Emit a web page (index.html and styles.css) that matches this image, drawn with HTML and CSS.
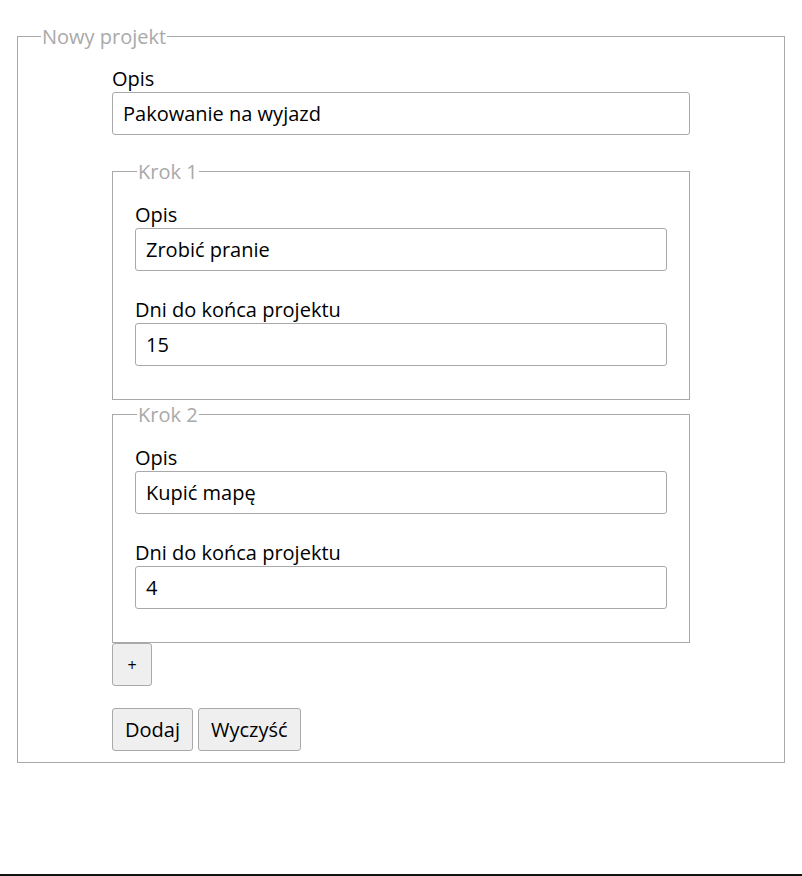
FILE: index.html
```html
<!DOCTYPE html>
<html lang="pl">
<head>
<meta charset="utf-8">
<title>Nowy projekt</title>
<link rel="stylesheet" href="styles.css">
</head>
<body>
<main class="page">
  <form class="project-form">
    <fieldset class="frame frame--project">
      <legend class="frame__legend">Nowy projekt</legend>
      <div class="frame__body frame__body--project">
        <div class="field field--main">
          <label class="field__label" for="p-opis">Opis</label>
          <input class="field__input" id="p-opis" type="text" value="Pakowanie na wyjazd">
        </div>

        <fieldset class="frame frame--step">
          <legend class="frame__legend">Krok 1</legend>
          <div class="frame__body frame__body--step">
            <div class="field">
              <label class="field__label" for="s1-opis">Opis</label>
              <input class="field__input" id="s1-opis" type="text" value="Zrobić pranie">
            </div>
            <div class="field">
              <label class="field__label" for="s1-dni">Dni do końca projektu</label>
              <input class="field__input" id="s1-dni" type="text" value="15">
            </div>
          </div>
        </fieldset>

        <fieldset class="frame frame--step">
          <legend class="frame__legend">Krok 2</legend>
          <div class="frame__body frame__body--step">
            <div class="field">
              <label class="field__label" for="s2-opis">Opis</label>
              <input class="field__input" id="s2-opis" type="text" value="Kupić mapę">
            </div>
            <div class="field">
              <label class="field__label" for="s2-dni">Dni do końca projektu</label>
              <input class="field__input" id="s2-dni" type="text" value="4">
            </div>
          </div>
        </fieldset>

        <div class="add-row">
          <button type="button" class="btn btn--add">+</button>
        </div>

        <div class="actions">
          <button type="submit" class="btn btn--main">Dodaj</button>
          <button type="reset" class="btn btn--main">Wyczyść</button>
        </div>
      </div>
    </fieldset>
  </form>
  <footer class="footer-line"></footer>
</main>
</body>
</html>
```
FILE: styles.css
```css
* {
  box-sizing: border-box;
}

html, body {
  margin: 0;
  padding: 0;
  background: #fff;
}

body {
  font-family: "Open Sans", "Noto Sans", sans-serif;
  font-size: 20px;
  color: #000;
}

.page {
  display: flex;
  flex-direction: column;
  height: 100vh;
}

.project-form {
  margin: 23px 17px 0 17px;
}

.frame {
  margin: 0;
  padding: 0;
  border: 1px solid #a9a9a9;
  min-width: 0;
}

.frame__legend {
  margin-left: 23px;
  padding: 0 1px;
  color: #a9a9a9;
  font-size: 20px;
  line-height: 27px;
}

.frame__body--project {
  padding: 15px 94px 11px 94px;
}

.frame__body--step {
  padding: 16px 22px 8px 22px;
}

.frame--step .frame__legend {
  margin-left: 24px;
}

.frame--step + .frame--step {
  margin-top: 1px;
}

.field {
  margin-bottom: 25px;
}

.field--main {
  margin-bottom: 23px;
}

.field__label {
  display: block;
  line-height: 27px;
}

.field__input {
  display: block;
  width: 100%;
  height: 43px;
  margin: 0;
  padding: 0 10px;
  border: 1px solid #a9a9a9;
  border-radius: 3px;
  font-family: inherit;
  font-size: 20px;
  color: #000;
  background: #fff;
}

.btn {
  margin: 0;
  height: 43px;
  border: 1px solid #a9a9a9;
  border-radius: 3px;
  background: #efefef;
  color: #000;
  font-family: inherit;
}

.add-row {
  display: flex;
}

.btn--add {
  width: 40px;
  padding: 0;
  font-size: 16px;
}

.actions {
  margin-top: 22px;
  display: flex;
  gap: 5px;
}

.btn--main {
  padding: 0 12px;
  font-size: 20px;
}

.footer-line {
  margin-top: auto;
  border-top: 2px solid #111;
}
```
